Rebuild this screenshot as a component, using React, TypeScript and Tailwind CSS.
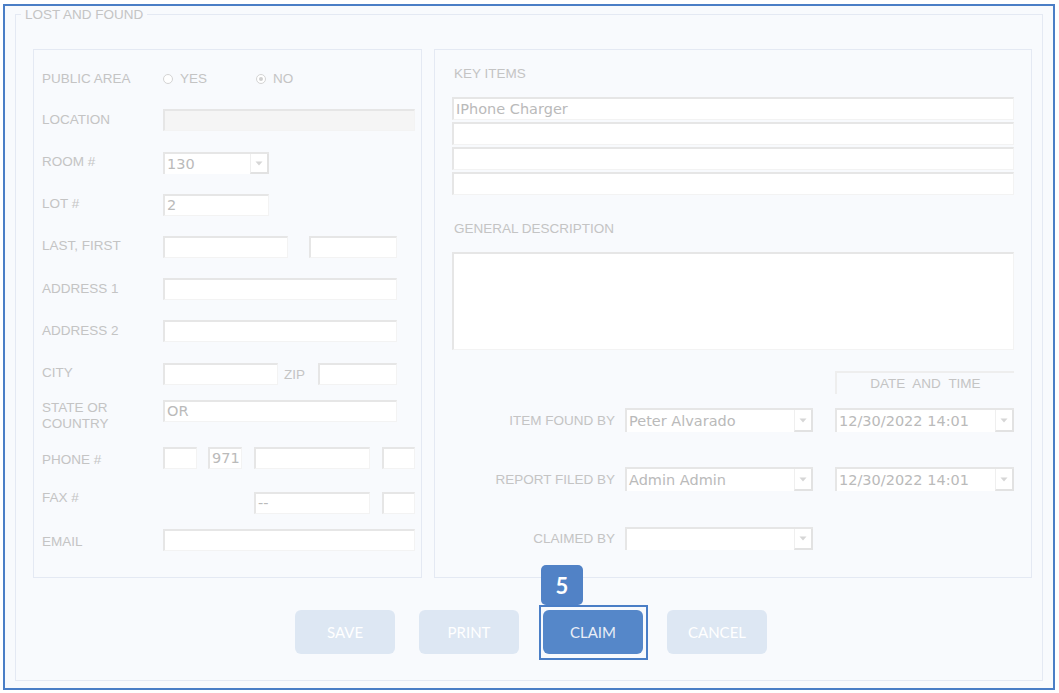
import React from "react";

const LABEL = "text-[13.5px] leading-[16px] text-[#c4c4c4] whitespace-nowrap";
const VALUE = "text-[14.5px] text-[#bababa] leading-none";

function Field({ w, h = 22, value, gray, className = "" }: { w: number; h?: number; value?: string; gray?: boolean; className?: string }) {
  return (
    <div
      style={{ width: w, height: h }}
      className={`flex shrink-0 items-center border-t-2 border-l-2 border-r border-b border-t-[#e6e6e6] border-l-[#e6e6e6] border-r-[#f3f3f3] border-b-[#f3f3f3] pl-[2px] ${gray ? "bg-[#f5f5f5]" : "bg-white"} ${className}`}
    >
      {value && <span className={VALUE} style={{ fontFamily: "'DejaVu Sans', Verdana, sans-serif" }}>{value}</span>}
    </div>
  );
}

function Select({ w, h = 22, value, className = "" }: { w: number; h?: number; value?: string; className?: string }) {
  return (
    <div
      style={{ width: w, height: h }}
      className={`flex shrink-0 border-t-2 border-l-2 border-t-[#e6e6e6] border-l-[#e6e6e6] bg-white ${className}`}
    >
      <div className="flex flex-1 items-center pl-[2px]">
        {value && <span className={VALUE} style={{ fontFamily: "'DejaVu Sans', Verdana, sans-serif" }}>{value}</span>}
      </div>
      <div className="flex w-[19px] items-center justify-center border-l border-r-2 border-b-2 border-l-[#efefef] border-r-[#e2e2e2] border-b-[#e2e2e2]">
        <svg width="8" height="5" viewBox="0 0 8 5"><path d="M0.5 0.5h7L4 4.5z" fill="#d6d6d6" /></svg>
      </div>
    </div>
  );
}

function Radio({ checked, label }: { checked?: boolean; label: string }) {
  return (
    <div className="flex items-center gap-[7px]">
      <span className="flex h-[10px] w-[10px] items-center justify-center rounded-full border border-[#d4d4d4] bg-white">
        {checked && <span className="h-[4px] w-[4px] rounded-full bg-[#d0d0d0]" />}
      </span>
      <span className={LABEL}>{label}</span>
    </div>
  );
}

function Row({ label, mt, children, labelClass = "" }: { label: React.ReactNode; mt: number; children?: React.ReactNode; labelClass?: string }) {
  return (
    <div className="flex h-[22px] items-center" style={{ marginTop: mt }}>
      <div className={`w-[121px] shrink-0 ${LABEL} ${labelClass}`}>{label}</div>
      {children}
    </div>
  );
}

function Button({ label, active }: { label: string; active?: boolean }) {
  return (
    <button
      className={`flex h-[44px] w-[100px] items-center justify-center rounded-[6px] text-[15px] ${active ? "bg-[#5587c9] text-[#e9eef7]" : "bg-[#dde7f3] text-white"}`}
      style={{ fontFamily: "Lato, 'Open Sans', sans-serif" }}
    >
      {label}
    </button>
  );
}

export default function App() {
  return (
    <div className="h-[693px] w-[1059px] bg-white pt-[4px] pl-[3px]" style={{ fontFamily: "'Liberation Sans', Arial, sans-serif" }}>
      <div className="h-[686px] w-[1052px] border-2 border-[#4a7ec6] bg-[#f8fafd] pt-[8px] pl-[10px]">
        {/* fieldset */}
        <div className="relative h-[667px] w-[1028px] border border-[#e4e9f3] pt-[34px] pl-[17px]">
          <span className={`absolute left-[5px] top-[-8px] bg-[#f8fafd] px-[4px] ${LABEL}`}>LOST AND FOUND</span>

          <div className="flex gap-[12px]">
            {/* left panel */}
            <div className="h-[529px] w-[389px] border border-[#e4e9f3] pl-[8px]">
              <Row label="PUBLIC AREA" mt={17} labelClass="mt-[1px]">
                <div className="mt-[2px] flex">
                  <Radio label="YES" />
                  <div className="ml-[49px]"><Radio checked label="NO" /></div>
                </div>
              </Row>
              <Row label="LOCATION" mt={20}><Field w={252} gray /></Row>
              <Row label="ROOM #" mt={21} labelClass="-mt-[2px]"><Select w={106} value="130" /></Row>
              <Row label="LOT #" mt={20} labelClass="-mt-[2px]"><Field w={106} value="2" /></Row>
              <Row label="LAST, FIRST" mt={20} labelClass="-mt-[2px]">
                <Field w={125} />
                <Field w={88} className="ml-[21px]" />
              </Row>
              <Row label="ADDRESS 1" mt={20} labelClass="-mt-[1px]"><Field w={234} /></Row>
              <Row label="ADDRESS 2" mt={20} labelClass="-mt-[1px]"><Field w={234} /></Row>
              <Row label="CITY" mt={21} labelClass="-mt-[2px]">
                <Field w={115} />
                <span className={`ml-[6px] mt-[1px] w-[34px] ${LABEL}`}>ZIP</span>
                <Field w={79} />
              </Row>
              <Row label={<>STATE OR<br />COUNTRY</>} mt={15} labelClass="mt-[9px]"><Field w={234} value="OR" /></Row>
              <Row label="PHONE #" mt={25} labelClass="mt-[4px]">
                <Field w={34} />
                <Field w={34} className="ml-[11px]" value="971" />
                <Field w={116} className="ml-[12px]" />
                <Field w={33} className="ml-[12px]" />
              </Row>
              <Row label="FAX #" mt={23} labelClass="-mt-[10px]">
                <Field w={116} className="ml-[91px]" value="--" />
                <Field w={33} className="ml-[12px]" />
              </Row>
              <Row label="EMAIL" mt={15} labelClass="mt-[4px]"><Field w={252} /></Row>
            </div>

            {/* right panel */}
            <div className="h-[529px] w-[598px] border border-[#e4e9f3] pl-[17px]">
              <div className={`mt-[16px] pl-[2px] ${LABEL}`}>KEY ITEMS</div>
              <div className="mt-[15px] flex flex-col gap-[2px]">
                <Field w={562} h={23} value="IPhone Charger" />
                <Field w={562} h={23} />
                <Field w={562} h={23} />
                <Field w={562} h={23} />
              </div>
              <div className={`mt-[26px] pl-[2px] ${LABEL}`}>GENERAL DESCRIPTION</div>
              <Field w={562} h={98} className="mt-[15px]" />

              <div className="ml-[383px] mt-[21px] flex h-[23px] w-[179px] items-center justify-center border-t-2 border-l-2 border-[#eeeeee] pt-[1px]">
                <span className={`${LABEL} [word-spacing:4px]`}>DATE AND TIME</span>
              </div>

              <div className="mt-[14px] flex h-[24px] items-center">
                <span className={`mt-[2px] w-[164px] pr-[1px] text-right ${LABEL}`}>ITEM FOUND BY</span>
                <Select w={188} h={24} value="Peter Alvarado" className="ml-[9px]" />
                <Select w={179} h={24} value="12/30/2022 14:01" className="ml-[22px]" />
              </div>
              <div className="mt-[35px] flex h-[24px] items-center">
                <span className={`mt-[2px] w-[164px] pr-[1px] text-right ${LABEL}`}>REPORT FILED BY</span>
                <Select w={188} h={24} value="Admin Admin" className="ml-[9px]" />
                <Select w={179} h={24} value="12/30/2022 14:01" className="ml-[22px]" />
              </div>
              <div className="mt-[36px] flex h-[23px] items-center">
                <span className={`mt-[1px] w-[164px] pr-[1px] text-right ${LABEL}`}>CLAIMED BY</span>
                <Select w={188} h={23} className="ml-[9px]" />
              </div>
            </div>
          </div>

          {/* buttons */}
          <div className="mt-[32px] flex gap-[24px] pl-[262px]">
            <Button label="SAVE" />
            <Button label="PRINT" />
            <div className="relative">
              <span className="pointer-events-none absolute -left-[4px] -right-[5px] -top-[5px] -bottom-[6px] border-2 border-[#4a7ec6]" />
              <span
                className="absolute left-[-2px] top-[-45px] flex h-[40px] w-[42px] items-center justify-center rounded-[5px] bg-[#5182c6] text-[22px] font-bold text-white"
                style={{ fontFamily: "Lato, 'Open Sans', sans-serif" }}
              >
                5
              </span>
              <Button label="CLAIM" active />
            </div>
            <Button label="CANCEL" />
          </div>
        </div>
      </div>
    </div>
  );
}
